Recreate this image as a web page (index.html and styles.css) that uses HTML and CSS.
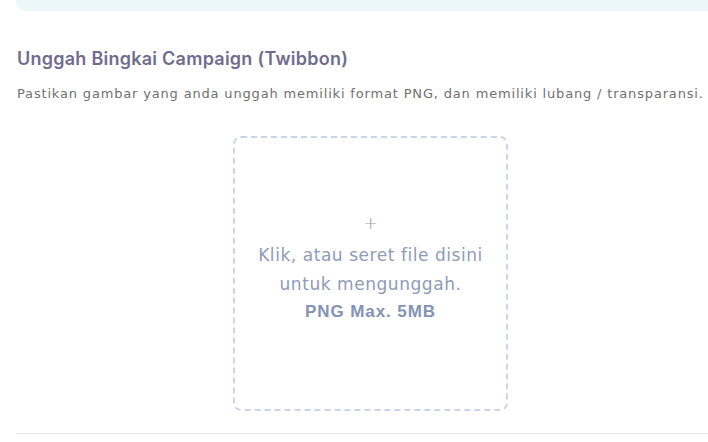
FILE: index.html
```html
<!DOCTYPE html>
<html lang="id">
<head>
<meta charset="utf-8">
<link rel="stylesheet" href="styles.css">
</head>
<body>
<div class="page">
  <div class="notice"></div>
  <section class="upload-section">
    <h2 class="title">Unggah Bingkai Campaign (Twibbon)</h2>
    <p class="desc">Pastikan gambar yang anda unggah memiliki format PNG, dan memiliki lubang / transparansi.</p>
    <div class="drop-wrap">
      <div class="dropzone">
        <span class="plus">+</span>
        <span class="drop-text">Klik, atau seret file disini<br>untuk mengunggah.</span>
        <span class="drop-limit">PNG Max. 5MB</span>
      </div>
    </div>
  </section>
  <hr class="divider">
</div>
</body>
</html>
```
FILE: styles.css
```css
html, body {
  margin: 0;
  padding: 0;
  background: #ffffff;
}
.page {
  padding-left: 16px;
  font-family: "DejaVu Sans", sans-serif;
}
.notice {
  height: 11px;
  background: #ebf7f8;
  border-bottom-left-radius: 10px;
}
.upload-section {
  padding: 35px 0 0 1px;
}
.title {
  margin: 0;
  font-family: "Inter", sans-serif;
  font-size: 18px;
  font-weight: 600;
  line-height: 26px;
  color: #6f6c8f;
  letter-spacing: 0.25px;
}
.desc {
  margin: 13px 0 0;
  font-size: 13px;
  line-height: 18px;
  color: #707070;
  letter-spacing: 0.83px;
  white-space: nowrap;
}
.drop-wrap {
  display: flex;
  justify-content: center;
  padding: 33px 0 22px 16px;
}
.dropzone {
  width: 271px;
  height: 261px;
  padding-bottom: 10px;
  border: 2px dashed #cad5e7;
  border-radius: 8px;
  display: flex;
  flex-direction: column;
  align-items: center;
  justify-content: center;
  text-align: center;
  color: #8e9bb8;
}
.plus {
  font-family: "DejaVu Sans", sans-serif;
  font-size: 17px;
  font-weight: 200;
  line-height: 20px;
  margin-bottom: 6px;
}
.drop-text {
  font-size: 17px;
  line-height: 29px;
  letter-spacing: 0.55px;
  margin-top: 2px;
}
.drop-limit {
  font-family: "Liberation Sans", sans-serif;
  font-weight: 700;
  font-size: 17px;
  line-height: 26px;
  letter-spacing: 0.9px;
  color: #8493b3;
}
.divider {
  margin: 0;
  border: 0;
  height: 1px;
  background: #e6e6e6;
}
```
